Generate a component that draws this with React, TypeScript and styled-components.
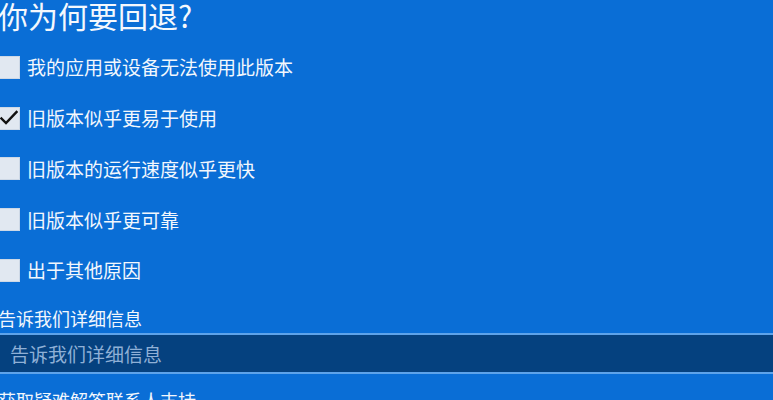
import React from "react";
import styled, { createGlobalStyle } from "styled-components";

const Global = createGlobalStyle`
  html, body {
    margin: 0;
    padding: 0;
    background: #0a6ed6;
    overflow: hidden;
  }
  body {
    font-family: "Noto Sans CJK SC", "Noto Sans", sans-serif;
    color: #ffffff;
  }
`;

const Page = styled.div`
  width: 773px;
  height: 400px;
  overflow: hidden;
  background: #0a6ed6;
`;

const Content = styled.div`
  margin-left: -2px;
  display: flex;
  flex-direction: column;
`;

const Heading = styled.h1`
  margin: 0;
  font-size: 30px;
  line-height: 30px;
  font-weight: 400;
  color: #f4f8fd;
`;

const List = styled.div`
  margin-top: 12px;
  display: flex;
  flex-direction: column;
`;

const Row = styled.label`
  height: 50.75px;
  display: flex;
  align-items: center;
  gap: 7px;
`;

const Box = styled.span`
  width: 22px;
  height: 23px;
  box-sizing: border-box;
  background: #e1e8f1;
  border: 1px solid #cdd8e6;
  display: flex;
  align-items: center;
  justify-content: center;
  flex: none;
`;

const RowText = styled.span`
  font-size: 19px;
  line-height: 24px;
  color: #f2f7fd;
`;

const Label = styled.div`
  margin-top: 10px;
  font-size: 18px;
  line-height: 24px;
  color: #f2f7fd;
`;

const Field = styled.input`
  margin-top: 3px;
  width: 790px;
  height: 41px;
  box-sizing: border-box;
  background: #05417f;
  border: 2px solid #5ea3ea;
  outline: none;
  padding: 0 0 0 10px;
  font-family: "Noto Sans CJK SC", "Noto Sans", sans-serif;
  font-size: 19px;
  color: #dbe6f3;
  &::placeholder {
    color: #8fb0d6;
  }
`;

const Link = styled.div`
  margin-top: 14px;
  font-size: 18px;
  line-height: 24px;
  color: #f2f7fd;
`;

const Check = () => (
  <svg width="18" height="16" viewBox="0 0 18 16">
    <polyline
      points="1.5,8.5 6,13 16.5,2"
      fill="none"
      stroke="#111"
      strokeWidth="2.4"
      strokeLinecap="square"
    />
  </svg>
);

const options = [
  { text: "我的应用或设备无法使用此版本", checked: false },
  { text: "旧版本似乎更易于使用", checked: true },
  { text: "旧版本的运行速度似乎更快", checked: false },
  { text: "旧版本似乎更可靠", checked: false },
  { text: "出于其他原因", checked: false },
];

export default function App() {
  return (
    <Page>
      <Global />
      <Content>
        <Heading>你为何要回退?</Heading>
        <List>
          {options.map((o) => (
            <Row key={o.text}>
              <Box>{o.checked && <Check />}</Box>
              <RowText>{o.text}</RowText>
            </Row>
          ))}
        </List>
        <Label>告诉我们详细信息</Label>
        <Field placeholder="告诉我们详细信息" />
        <Link>获取疑难解答联系人支持</Link>
      </Content>
    </Page>
  );
}
